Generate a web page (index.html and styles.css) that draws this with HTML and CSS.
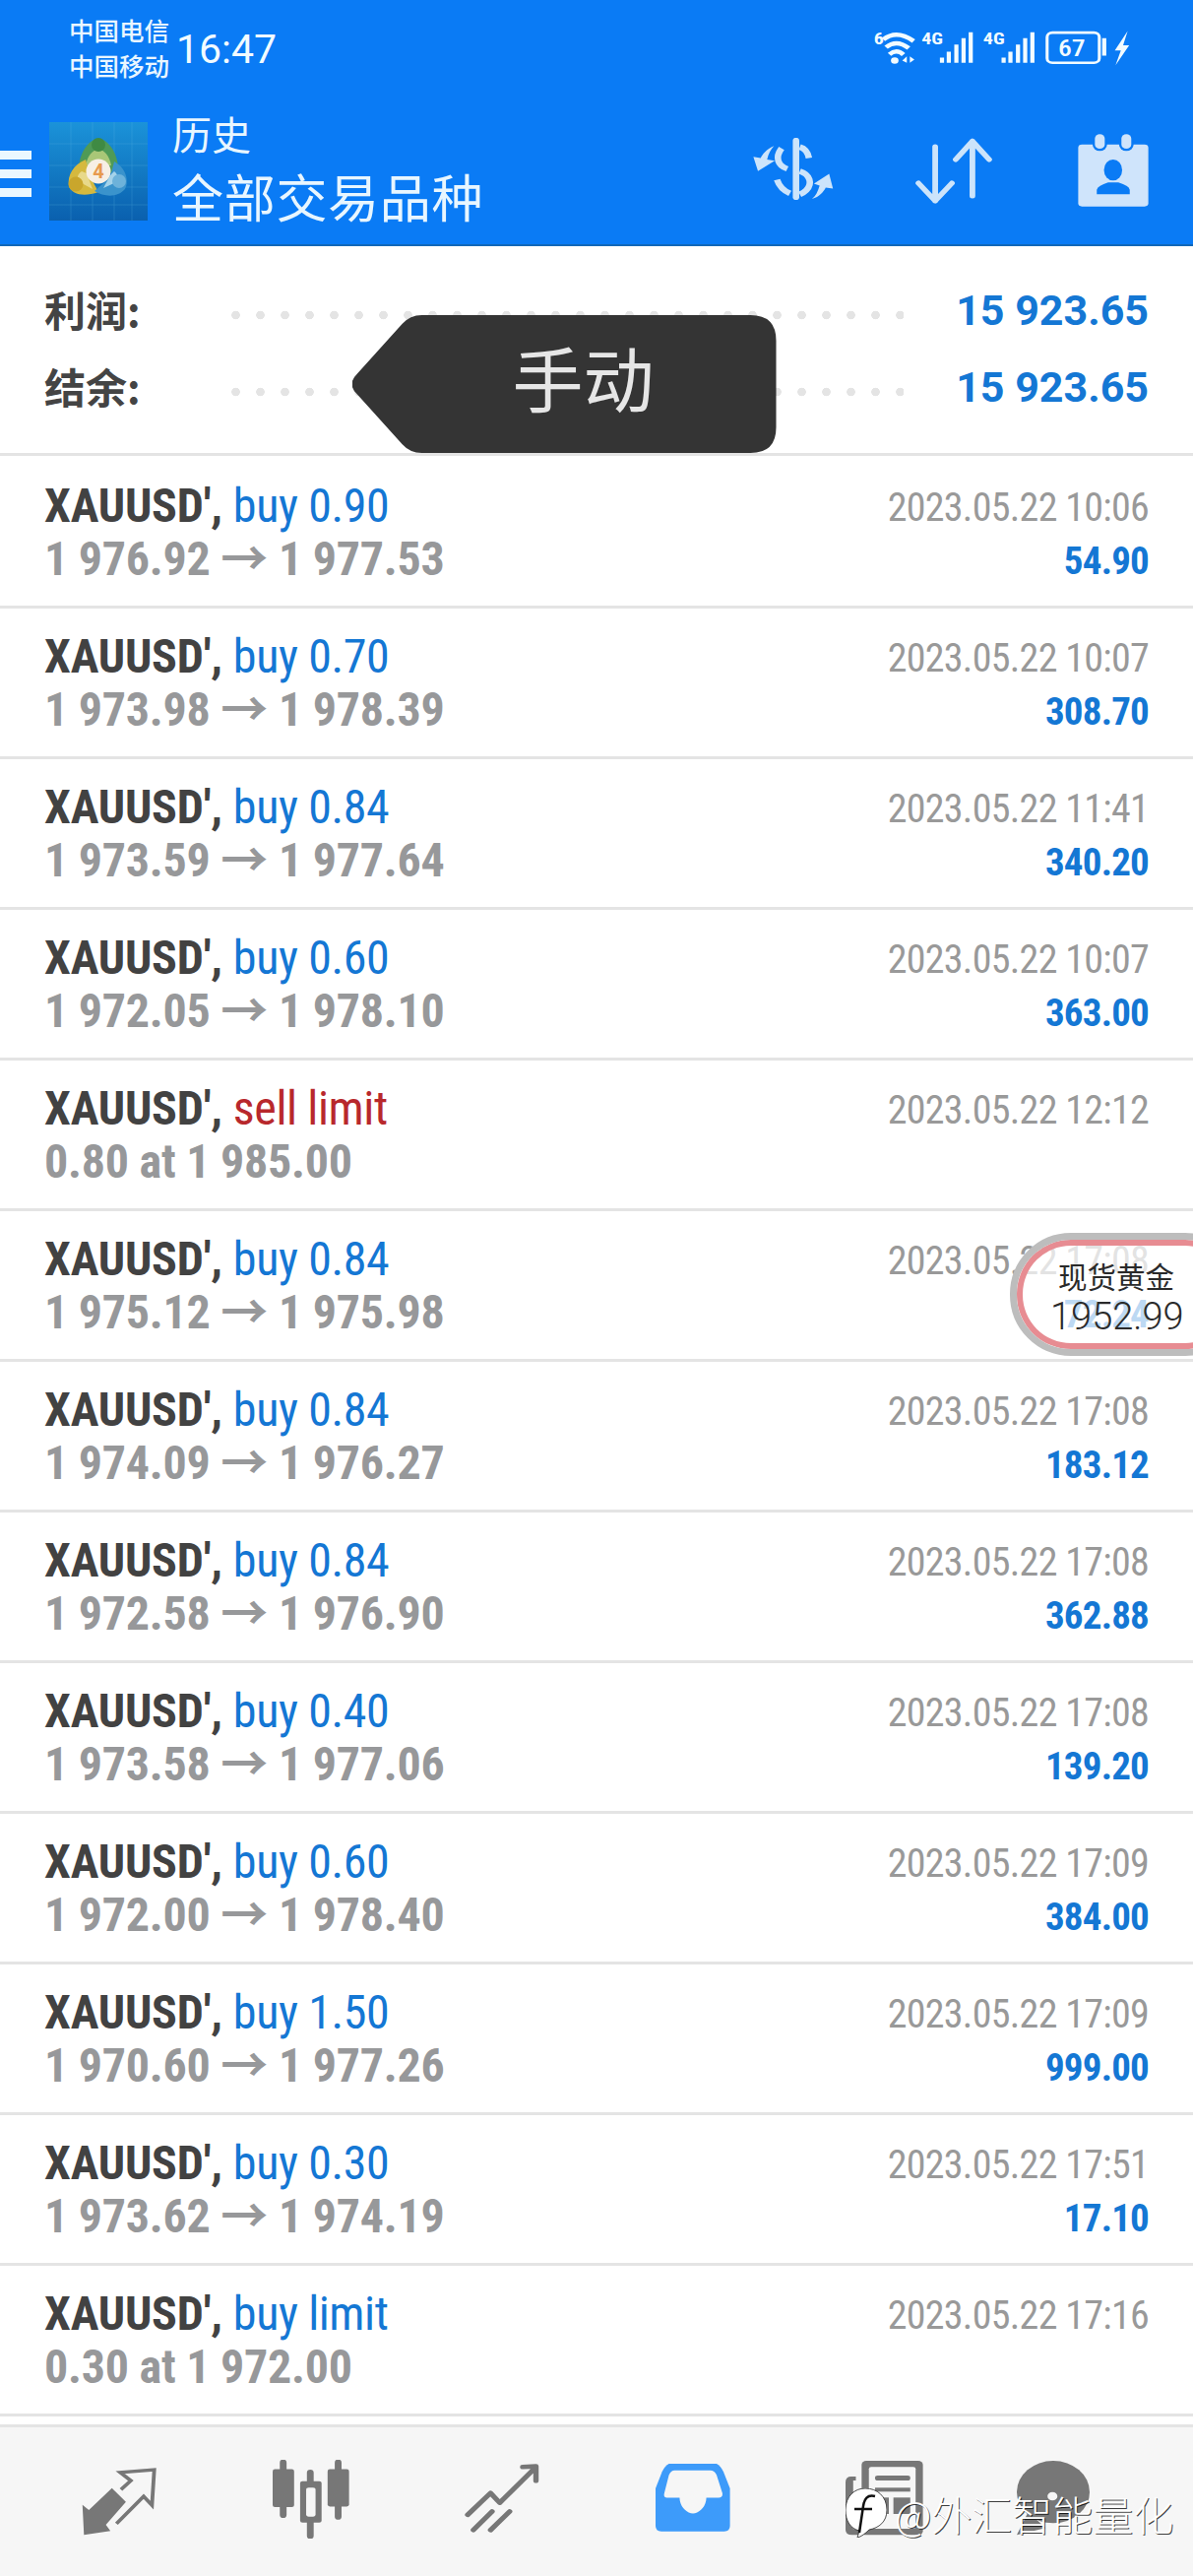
FILE: index.html
```html
<!DOCTYPE html>
<html lang="zh">
<head>
<meta charset="utf-8">
<title>历史</title>
<link rel="stylesheet" href="styles.css">
</head>
<body>
<div class="app">
  <header class="header">
    <div class="status">
      <div class="carriers"><div>中国电信</div><div>中国移动</div></div>
      <div class="clock">16:47</div>
      <svg class="status-icons" viewBox="715 70 695 140" preserveAspectRatio="none">
        <g fill="none" stroke="#f2fbff" stroke-linecap="butt">
          <path d="M750 122Q785 90 830 127M757 146Q785 120 817 149M766 168Q785 150 803 169" stroke-width="13"/>
          <path d="M905 178V194M923 160V194M943 138V194M962 118V194M981 100V194M1068 178V194M1086 160V194M1106 138V194M1125 118V194M1144 100V194" stroke-width="11"/>
          <rect x="1183" y="101" width="138" height="93" rx="14" stroke-width="8"/>
          <path d="M1334 118V172" stroke-width="11"/>
        </g>
        <g fill="#f2fbff">
          <circle cx="780" cy="187" r="10"/>
          <path d="M800 187L812 174V194ZM820 174L832 184L820 194Z"/>
          <path d="M1396 96L1362 156L1378 156L1364 202L1400 140L1384 140Z"/>
          <text class="st-small" x="725" y="136">6</text>
          <text class="st-small" x="851" y="136">4G</text>
          <text class="st-small" x="1014" y="136">4G</text>
          <text class="st-batt" x="1212" y="172">67</text>
        </g>
      </svg>
    </div>
    <div class="toolbar">
      <div class="burger"><span></span><span></span><span></span></div>
      <svg class="logo" viewBox="0 0 100 100">
        <defs>
          <linearGradient id="lg" x1="0" y1="0" x2="0" y2="1">
            <stop offset="0" stop-color="#1b93d9"/>
            <stop offset="1" stop-color="#0a60ae"/>
          </linearGradient>
        </defs>
        <rect width="100" height="100" fill="url(#lg)"/>
        <path d="M0 22H100M0 44H100M0 66H100M0 84H100M22 0V100M44 0V100M66 0V100M84 0V100" stroke="#6cc4ec" stroke-width=".6" opacity=".35"/>
        <path fill="#4f9a56" d="M30 46C31 30 41 17 50 17C59 17 69 30 70 46L62 52H38Z"/>
        <path fill="#a9c777" d="M37 44C39 34 44 28 50 28C56 28 61 34 63 44L56 44H44Z"/>
        <path fill="#d5b93e" d="M37 38C25 43 18 54 20 65C23 74 36 76 50 71L42 56Z"/>
        <path fill="#e8d98a" d="M33 50C27 54 28 60 33 62L44 68L38 52Z"/>
        <path fill="#3a93cc" d="M66 40C79 47 81 61 77 68C69 77 56 76 46 70L62 56Z"/>
        <path fill="#a5d3ea" d="M66 50C71 54 71 60 66 62L55 67L62 54Z"/>
        <circle cx="50" cy="23" r="7" fill="#3f8a43"/>
        <circle cx="27" cy="63" r="7.5" fill="#c9a62c"/>
        <circle cx="71" cy="60" r="7" fill="#6db2da"/>
        <circle cx="50" cy="50" r="12.5" fill="#f7efe5"/>
        <text class="logo-4" x="50" y="57">4</text>
      </svg>
      <div class="titles">
        <div class="title-small">历史</div>
        <div class="title-big">全部交易品种</div>
      </div>
      <div class="actions">
        <svg class="act act-dollar" viewBox="415 420 212 190" preserveAspectRatio="none">
          <g fill="none" stroke="#cce4fb" stroke-width="17">
            <path d="M528 428V602" stroke-linecap="round"/>
            <path d="M562 482C558 458 544 450 538 448M490 452C472 480 480 505 505 515M538 522C565 532 572 560 555 580C550 586 544 590 538 593M478 548C485 572 498 583 512 590"/>
          </g>
          <path fill="#cce4fb" d="M470 445C450 455 440 470 435 482L416 478L428 522L472 490L452 486C455 470 462 455 470 445ZM570 607C590 600 600 585 606 572L625 575L615 530L575 560L590 566C585 585 580 598 570 607Z"/>
        </svg>
        <svg class="act act-arrows" viewBox="838 418 202 204" preserveAspectRatio="none">
          <path d="M890 445V610M846 556L890 610L934 556M988 595V428M944 484L988 428L1032 484" fill="none" stroke="#cce4fb" stroke-width="15" stroke-linecap="round" stroke-linejoin="round"/>
        </svg>
        <svg class="act act-cal" viewBox="1265 405 187 225" preserveAspectRatio="none">
          <rect x="1266" y="440" width="185" height="189" rx="10" fill="#cfe4fb"/>
          <rect x="1304" y="405" width="38" height="55" rx="19" fill="#0a7bf5"/>
          <rect x="1374" y="405" width="38" height="55" rx="19" fill="#0a7bf5"/>
          <rect x="1310" y="409" width="26" height="44" rx="13" fill="#cfe4fb"/>
          <rect x="1380" y="409" width="26" height="44" rx="13" fill="#cfe4fb"/>
          <ellipse cx="1358" cy="518" rx="24" ry="32" fill="#0a7bf5"/>
          <path d="M1315 592V578Q1318 566 1345 556H1372Q1400 566 1402 578V592Z" fill="#0a7bf5"/>
        </svg>
      </div>
    </div>
  </header>

  <section class="summary">
    <div class="sum-row"><span class="sum-label">利润:</span><span class="dots"></span><span class="sum-value">15 923.65</span></div>
    <div class="sum-row"><span class="sum-label">结余:</span><span class="dots"></span><span class="sum-value">15 923.65</span></div>
  </section>

  <ul class="list">
    <li class="row"><div><div class="line1"><b>XAUUSD',</b> <span class="buy">buy 0.90</span></div><div class="line2">1 976.92 → 1 977.53</div></div><div class="meta"><div class="date">2023.05.22 10:06</div><div class="profit">54.90</div></div></li>
    <li class="row"><div><div class="line1"><b>XAUUSD',</b> <span class="buy">buy 0.70</span></div><div class="line2">1 973.98 → 1 978.39</div></div><div class="meta"><div class="date">2023.05.22 10:07</div><div class="profit">308.70</div></div></li>
    <li class="row"><div><div class="line1"><b>XAUUSD',</b> <span class="buy">buy 0.84</span></div><div class="line2">1 973.59 → 1 977.64</div></div><div class="meta"><div class="date">2023.05.22 11:41</div><div class="profit">340.20</div></div></li>
    <li class="row"><div><div class="line1"><b>XAUUSD',</b> <span class="buy">buy 0.60</span></div><div class="line2">1 972.05 → 1 978.10</div></div><div class="meta"><div class="date">2023.05.22 10:07</div><div class="profit">363.00</div></div></li>
    <li class="row"><div><div class="line1"><b>XAUUSD',</b> <span class="sell">sell limit</span></div><div class="line2">0.80 at 1 985.00</div></div><div class="meta"><div class="date">2023.05.22 12:12</div></div></li>
    <li class="row"><div><div class="line1"><b>XAUUSD',</b> <span class="buy">buy 0.84</span></div><div class="line2">1 975.12 → 1 975.98</div></div><div class="meta"><div class="date">2023.05.22 17:08</div><div class="profit">72.24</div></div></li>
    <li class="row"><div><div class="line1"><b>XAUUSD',</b> <span class="buy">buy 0.84</span></div><div class="line2">1 974.09 → 1 976.27</div></div><div class="meta"><div class="date">2023.05.22 17:08</div><div class="profit">183.12</div></div></li>
    <li class="row"><div><div class="line1"><b>XAUUSD',</b> <span class="buy">buy 0.84</span></div><div class="line2">1 972.58 → 1 976.90</div></div><div class="meta"><div class="date">2023.05.22 17:08</div><div class="profit">362.88</div></div></li>
    <li class="row"><div><div class="line1"><b>XAUUSD',</b> <span class="buy">buy 0.40</span></div><div class="line2">1 973.58 → 1 977.06</div></div><div class="meta"><div class="date">2023.05.22 17:08</div><div class="profit">139.20</div></div></li>
    <li class="row"><div><div class="line1"><b>XAUUSD',</b> <span class="buy">buy 0.60</span></div><div class="line2">1 972.00 → 1 978.40</div></div><div class="meta"><div class="date">2023.05.22 17:09</div><div class="profit">384.00</div></div></li>
    <li class="row"><div><div class="line1"><b>XAUUSD',</b> <span class="buy">buy 1.50</span></div><div class="line2">1 970.60 → 1 977.26</div></div><div class="meta"><div class="date">2023.05.22 17:09</div><div class="profit">999.00</div></div></li>
    <li class="row"><div><div class="line1"><b>XAUUSD',</b> <span class="buy">buy 0.30</span></div><div class="line2">1 973.62 → 1 974.19</div></div><div class="meta"><div class="date">2023.05.22 17:51</div><div class="profit">17.10</div></div></li>
    <li class="row"><div><div class="line1"><b>XAUUSD',</b> <span class="buy">buy limit</span></div><div class="line2">0.30 at 1 972.00</div></div><div class="meta"><div class="date">2023.05.22 17:16</div></div></li>
  </ul>

  <nav class="nav">
    <svg class="nav-i nav-trade" viewBox="216 258 198 199" preserveAspectRatio="none">
      <path fill="#777" d="M296 318L333 358L280 425L292 443L222 455L218 367L235 382Z"/>
      <path fill="none" stroke="#777" stroke-width="10" d="M320 322L346 296L318 272L408 264L402 368L380 342L308 422"/>
    </svg>
    <svg class="nav-i nav-candle" viewBox="715 240 204 233" preserveAspectRatio="none">
      <path d="M743 248V403M815 278V465M889 248V408" stroke="#777" stroke-width="18" stroke-linecap="round"/>
      <rect x="715" y="268" width="57" height="112" rx="6" fill="#777"/>
      <rect x="861" y="268" width="57" height="110" rx="6" fill="#777"/>
      <rect x="788" y="303" width="57" height="123" rx="6" fill="#777"/>
      <rect x="804" y="322" width="25" height="86" rx="7" fill="#f6f6f6"/>
    </svg>
    <svg class="nav-i nav-trend" viewBox="1220 248 196 212" preserveAspectRatio="none">
      <path d="M1228 405L1288 338L1312 368L1402 264M1372 258L1407 256L1407 300M1243 452L1292 395M1288 452L1338 395" fill="none" stroke="#777" stroke-width="14" stroke-linecap="round" stroke-linejoin="round"/>
    </svg>
    <svg class="nav-i nav-inbox" viewBox="155 250 196 208" preserveAspectRatio="none">
      <path fill="#3d9bfa" d="M190 250H315Q325 255 333 275L350 325V440Q350 457 335 457H170Q155 457 155 440V325L172 275Q180 255 190 250Z"/>
      <path fill="#f6f6f6" d="M205 270H298Q310 270 315 285L330 340Q332 354 320 354H288C288 380 270 402 253 402C236 402 218 380 218 354H185Q175 354 178 340L190 285Q195 270 205 270Z"/>
    </svg>
    <svg class="nav-i nav-news" viewBox="655 240 203 228" preserveAspectRatio="none">
      <rect x="697" y="240" width="160" height="226" rx="12" fill="#777"/>
      <rect x="716" y="259" width="122" height="188" rx="6" fill="#f6f6f6"/>
      <path d="M682 288H670Q655 288 655 305V450Q655 466 672 466H700V448H675V300H682Z" fill="#777"/>
      <rect x="732" y="285" width="92" height="15" rx="7" fill="#777"/>
      <rect x="732" y="322" width="92" height="12" fill="#777"/>
      <rect x="780" y="352" width="44" height="50" fill="#777"/>
      <rect x="732" y="352" width="36" height="50" fill="#777"/>
    </svg>
    <svg class="nav-i nav-chat" viewBox="1105 240 190 228" preserveAspectRatio="none">
      <circle cx="1200" cy="335" r="95" fill="#777"/>
      <path d="M1135 395L1105 466L1180 445Z" fill="#777"/>
      <circle cx="1198" cy="348" r="13" fill="#f6f6f6"/>
    </svg>
  </nav>

  <div class="toast">
    <svg class="toast-shape" viewBox="0 0 430 140"><path d="M58 0H404Q430 0 430 26V114Q430 140 404 140H70Q58 140 50 131L4 80Q-6 70 4 60L50 9Q58 0 70 0Z"/></svg>
    <span class="toast-text">手动</span>
  </div>

  <div class="pill">
    <div class="pill-name">现货黄金</div>
    <div class="pill-price">1952.99</div>
  </div>

  <div class="watermark">
    <svg class="wm-logo" viewBox="0 0 42 50">
      <path d="M20 0C32 0 42 8 42 22C42 34 34 40 24 42C20 46 16 49 12 50L14 43C5 41 0 33 0 22C0 8 9 0 20 0Z" fill="#fff" stroke="#222" stroke-width=".8"/>
      <path d="M30 8C22 6 19 11 18 18L14 45M9 21H27" fill="none" stroke="#111" stroke-width="2.5"/>
    </svg>
    <span class="wm-text">@外汇智能量化</span>
  </div>
</div>
</body>
</html>
```

FILE: styles.css
```css
* { box-sizing: border-box; }
html, body { margin: 0; padding: 0; }
body { background: #fff; font-family: Roboto, "Noto Sans CJK SC", sans-serif; }
.app { position: relative; width: 1212px; height: 2616px; overflow: hidden; display: flex; flex-direction: column; }

/* header */
.header { height: 250px; background: #0a7bf5; border-bottom: 2px solid #1268b8; color: #fff; flex: none; }
.status { height: 100px; display: flex; align-items: flex-start; padding: 12px 61px 0 70px; }
.carriers { width: 109px; font: 500 25.5px/36px "Noto Sans CJK SC", sans-serif; color: #e9f6ff; }
.clock { font: 400 41px/50px Roboto, sans-serif; margin-top: 13px; color: #f2fbff; }
.status-icons { width: 267px; height: 46px; margin: 11px 0 0 auto; }
.st-small { font: 700 52px Roboto, sans-serif; font-stretch: 75%; }
.st-batt { font: 500 72px Roboto, sans-serif; font-stretch: 75%; }

.toolbar { height: 148px; display: flex; align-items: flex-start; position: relative; }
.burger { width: 32px; margin-top: 53px; display: flex; flex-direction: column; gap: 10px; }
.burger span { display: block; height: 9px; background: #eaf7ff; }
.logo { width: 100px; height: 100px; margin: 24px 0 0 18px; }
.titles { margin-left: 25px; color: #e8f6ff; font-family: "Noto Sans CJK SC", sans-serif; }
.title-small { font-size: 40px; line-height: 48px; margin-top: 11px; }
.title-big { font-size: 52px; line-height: 66px; letter-spacing: .7px; margin-top: 7px; }
.actions { margin-left: auto; display: flex; align-items: flex-start; padding-right: 45px; }
.act { display: block; }
.act-dollar { width: 82px; height: 63px; margin-top: 40px; }
.act-arrows { width: 78px; height: 68px; margin: 40px 0 0 83px; }
.act-cal { width: 72px; height: 75px; margin: 35px 0 0 87px; }

/* summary */
.summary { height: 213px; flex: none; border-bottom: 3px solid #e4e4e4; padding: 26px 45px 0; }
.sum-row { height: 78px; display: flex; align-items: center; }
.sum-label { width: 182px; font: 700 42px/1 "Noto Sans CJK SC", sans-serif; color: #444; margin-top: -3px; }
.dots { width: 691px; height: 10px; margin-top: 10px; background: radial-gradient(circle, #e4e4e4 4px, transparent 4.6px) 0 0 / 25px 10px repeat-x; }
.sum-value { margin-left: auto; font: 700 43px/1 Roboto, sans-serif; color: #1477d4; white-space: nowrap; }

/* list */
.list { list-style: none; margin: 2px 0 0; padding: 0; display: grid; grid-auto-rows: 153px; flex: none; }
.row { display: flex; justify-content: space-between; padding: 22px 45px 0; border-bottom: 3px solid #e4e4e4; font-stretch: 75%; }
.line1, .line2 { font-size: 48px; line-height: 54px; white-space: nowrap; }
.line1 b { font-weight: 700; color: #424242; letter-spacing: -.2px; }
.buy, .sell { font-weight: 400; letter-spacing: -.4px; }
.buy { color: #1477d4; }
.sell { color: #b8282c; }
.line2 { color: #97989a; font-weight: 700; letter-spacing: -.25px; }
.meta { text-align: right; padding-top: 2px; }
.date { font-size: 40px; line-height: 54px; letter-spacing: -.7px; color: #999; }
.profit { font-size: 39px; line-height: 54px; letter-spacing: -.8px; font-weight: 700; color: #1477d4; }

/* bottom nav */
.nav { margin-top: 8px; border-top: 3px solid #e4e4e4; background: #f6f6f6; flex: 1; display: flex; align-items: flex-start; padding-left: 83px; }
.nav-i { display: block; flex: none; }
.nav-trade { width: 76px; height: 69px; margin-top: 41px; }
.nav-candle { width: 78px; height: 80px; margin: 33px 0 0 118px; }
.nav-trend { width: 76px; height: 70px; margin: 37px 0 0 117px; }
.nav-inbox { width: 76px; height: 69px; margin: 37px 0 0 118px; }
.nav-news { width: 79px; height: 76px; margin: 34px 0 0 117px; }
.nav-chat { width: 74px; height: 76px; margin: 34px 0 0 95px; }

/* overlays */
.toast { position: absolute; left: 358px; top: 320px; width: 431px; height: 140px; display: flex; align-items: center; justify-content: center; padding: 0 0 16px 38px; }
.toast-shape { position: absolute; inset: 0; width: 100%; height: 100%; fill: rgba(49, 49, 49, .985); }
.toast-text { position: relative; font: 400 72px/1 "Noto Sans CJK SC", sans-serif; color: #e6e6e6; }

.pill { position: absolute; left: 1026px; top: 1252px; width: 240px; height: 125px; border-radius: 62px; border: 7px solid #bdbdbd; background: rgba(255, 255, 255, .72); box-shadow: inset 0 0 0 6px #e78c92; padding: 15px 0 0 34px; color: #2a2a2a; }
.pill-name { font: 400 29.5px/43px "Noto Sans CJK SC", sans-serif; padding-left: 8px; }
.pill-price { font: 300 38px/40px Roboto, sans-serif; white-space: nowrap; }

.watermark { position: absolute; left: 859px; top: 2527px; display: flex; align-items: center; }
.wm-logo { width: 42px; height: 50px; display: block; }
.wm-text { margin-left: 8px; font: 300 41px/50px "Noto Sans CJK SC", sans-serif; color: #fff; text-shadow: 1px 1px 0 rgba(0, 0, 0, .75); white-space: nowrap; }
.logo-4 { font: 700 20px Roboto, sans-serif; fill: #e79a4f; text-anchor: middle; }
```
